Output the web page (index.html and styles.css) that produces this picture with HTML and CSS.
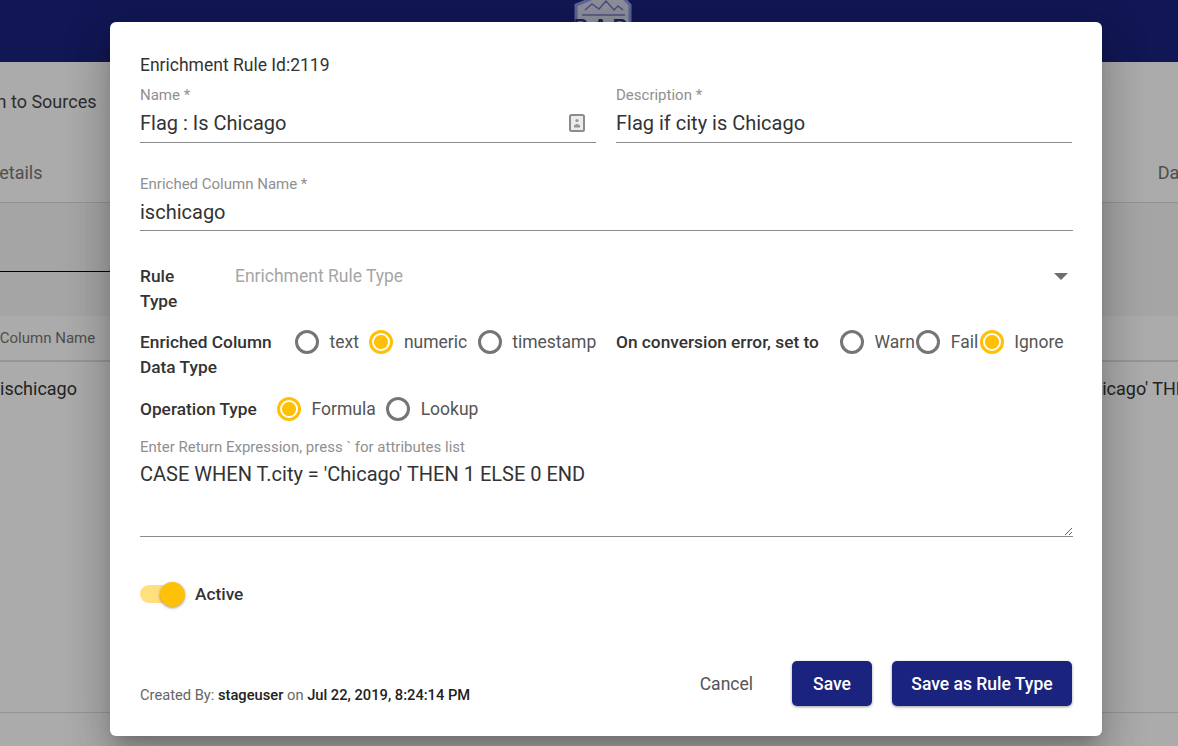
FILE: index.html
```html
<!DOCTYPE html>
<html lang="en">
<head>
<meta charset="utf-8">
<title>Enrichment Rule</title>
<link rel="stylesheet" href="styles.css">
</head>
<body>
<div class="page">
  <header class="topbar">
    <svg class="logo" width="60" height="40" viewBox="0 0 60 40">
      <path d="M18 7 L30 1 L46 1 L57 13 L57 40 L3 40 L3 13 Z" fill="#d2d5e8" stroke="#8a94e0" stroke-width="3"/>
      <path d="M12 18 L19 12 L26 17 L33 9 L41 18 L45 14 L50 18" fill="none" stroke="#6f78c0" stroke-width="1.5"/>
      <path d="M9 23 H52" stroke="#6f78c0" stroke-width="1.5"/>
      <text x="30" y="41" class="logo-text" text-anchor="middle">BAR</text>
    </svg>
  </header>
  <div class="crumb">Return to Sources</div>
  <nav class="tabs">
    <span class="tab">Rule Details</span>
    <span class="tab">Data</span>
  </nav>
  <div class="search"><div class="search-line"></div></div>
  <div class="table-head"><span>Enriched Column Name</span></div>
  <div class="table-row">
    <span class="cell-name">ischicago</span>
    <span class="cell-expr">CASE WHEN T.city = 'Chicago' THEN 1 ELSE 0 END</span>
  </div>
</div>
<div class="overlay"></div>
<main class="dialog">
  <div class="rule-id">Enrichment Rule Id:2119</div>
  <div class="field-row">
    <div class="field field-name">
      <label class="field-label">Name *</label>
      <div class="field-value">Flag : Is Chicago
        <svg class="contact-icon" width="18" height="20" viewBox="0 0 18 20">
          <rect x="2" y="2" width="14" height="16" rx="1.5" fill="#ececec" stroke="#8c8c8c" stroke-width="2"/>
          <circle cx="9" cy="7.5" r="1.6" fill="#969696"/>
          <path d="M6 14.5 V12.5 Q9 9.5 12 12.5 V14.5 Z" fill="#969696"/>
        </svg>
      </div>
    </div>
    <div class="field field-desc">
      <label class="field-label">Description *</label>
      <div class="field-value">Flag if city is Chicago</div>
    </div>
  </div>
  <div class="field field-full">
    <label class="field-label">Enriched Column Name *</label>
    <div class="field-value field-value-short">ischicago</div>
  </div>
  <div class="rule-type">
    <div class="strong-label rule-label">Rule Type</div>
    <div class="select-text">Enrichment Rule Type</div>
    <span class="select-arrow"></span>
  </div>
  <div class="radio-rows">
    <div class="strong-label col-label">Enriched Column Data Type</div>
    <div class="radio-group group-type">
      <span class="radio"></span><span class="radio-text">text</span>
      <span class="radio on"></span><span class="radio-text">numeric</span>
      <span class="radio"></span><span class="radio-text">timestamp</span>
    </div>
    <div class="strong-label err-label">On conversion error, set to</div>
    <div class="radio-group group-err">
      <span class="radio"></span><span class="radio-text tight">Warn</span>
      <span class="radio"></span><span class="radio-text tight">Fail</span>
      <span class="radio on"></span><span class="radio-text">Ignore</span>
    </div>
  </div>
  <div class="op-row">
    <div class="strong-label op-label">Operation Type</div>
    <div class="radio-group">
      <span class="radio on"></span><span class="radio-text">Formula</span>
      <span class="radio"></span><span class="radio-text">Lookup</span>
    </div>
  </div>
  <div class="field-expr">
    <label class="field-label">Enter Return Expression, press ` for attributes list</label>
    <textarea class="expr" rows="3">CASE WHEN T.city = 'Chicago' THEN 1 ELSE 0 END</textarea>
  </div>
  <div class="active-row">
    <span class="switch"><span class="thumb"></span></span>
    <span class="strong-label">Active</span>
  </div>
  <footer class="foot">
    <div class="created">Created By: <b>stageuser</b> on <b>Jul 22, 2019, 8:24:14 PM</b></div>
    <div class="actions">
      <button class="btn-text">Cancel</button>
      <button class="btn btn-save">Save</button>
      <button class="btn btn-rule">Save as Rule Type</button>
    </div>
  </footer>
</main>
</body>
</html>
```
FILE: styles.css
```css
* { box-sizing: border-box; }
html, body { margin: 0; height: 100%; overflow: hidden; }
body { font-family: Roboto, "Liberation Sans", sans-serif; background: #fff; color: #333; }

.page { width: 1178px; height: 746px; overflow: hidden; background: #fff; }
.topbar { height: 62px; background: #1a237e; display: flex; justify-content: center; }
.logo { margin-left: 27px; margin-top: -8px; }
.logo-text { font: 700 20px "Liberation Sans", sans-serif; fill: #27337f; letter-spacing: 5px; }

.crumb { height: 78px; padding-top: 28px; margin-left: -46px; font-size: 18px; line-height: 24px; color: #444; white-space: nowrap; }
.tabs { height: 63px; margin-left: -52px; margin-right: -17px; padding-top: 21px; display: flex; justify-content: space-between; border-bottom: 1px solid #ddd; font-size: 18px; line-height: 24px; color: #777; }
.search { height: 113px; background: #f7f7f7; }
.search-line { width: 110px; height: 69px; border-bottom: 1px solid #000; }
.table-head { height: 46px; background: #fff; border-bottom: 2px solid #e0e0e0; font-size: 15px; color: #757575; line-height: 44px; white-space: nowrap; margin-left: -62px; padding-right: 62px; }
.table-row { height: 351px; display: flex; background: #fff; border-bottom: 1px solid #ddd; font-size: 18px; line-height: 24px; padding-top: 15px; color: #333; white-space: nowrap; }
.cell-name { flex: none; width: 912px; }
.cell-expr { flex: none; }

.overlay { position: absolute; inset: 0; background: rgba(0, 0, 0, .33); }
.dialog {
  position: absolute; left: 110px; top: 22px; width: 992px; height: 714px;
  background: #fff; border-radius: 6px; padding: 33px 30px 0;
  box-shadow: 0 11px 15px -7px rgba(0,0,0,.2), 0 24px 38px 3px rgba(0,0,0,.14), 0 9px 46px 8px rgba(0,0,0,.12);
  display: flex; flex-direction: column;
}
.rule-id { font-size: 17.5px; line-height: 20px; color: #333; }

.field-row { display: flex; gap: 20px; margin-top: 8px; }
.field-label { display: block; font-size: 15px; line-height: 20px; color: #8f8f8f; white-space: nowrap; }
.field-value { position: relative; height: 38px; font-size: 20px; line-height: 36px; color: #333; border-bottom: 1px solid #8c8c8c; white-space: nowrap; }
.field-value-short { height: 37px; }
.field-name, .field-desc { width: 456px; padding-top: 2px; }
.field-full { width: 933px; margin-top: 31px; }
.contact-icon { position: absolute; right: 10px; top: 8px; }

.strong-label { font-size: 17.3px; font-weight: 500; line-height: 25px; color: #333; }
.rule-type { display: flex; position: relative; margin-top: 33px; height: 50px; }
.rule-label { width: 95px; padding-right: 40px; }
.select-text { font-size: 17.5px; line-height: 25px; color: #a6a6a6; }
.select-arrow { position: absolute; left: 914px; top: 9px; width: 0; height: 0; border-left: 7px solid transparent; border-right: 7px solid transparent; border-top: 7px solid #6e6e6e; }

.radio-rows { display: flex; margin-top: 16px; height: 67px; }
.col-label { width: 155px; flex: none; }
.radio-group { display: flex; align-items: center; height: 23px; }
.group-type { width: 321px; flex: none; }
.err-label { width: 224px; flex: none; white-space: nowrap; }
.radio { width: 24px; height: 24px; flex: none; border: 3px solid #757575; border-radius: 50%; background: #fff; display: block; }
.radio.on { border-color: #ffc107; background: radial-gradient(circle, #ffc107 0, #ffc107 6.5px, #fff 7.5px); }
.radio-text { font-size: 17.5px; color: #555; margin-left: 10.5px; margin-right: 10.5px; }
.radio-text.tight { margin-right: 1.5px; }

.op-row { display: flex; height: 25px; }
.op-label { width: 137px; flex: none; }

.field-expr { width: 933px; margin-top: 15px; }
.expr { display: block; width: 100%; height: 80px; border: 0; border-bottom: 1px solid #8c8c8c; padding: 0; margin: 0; outline: 0; font: 20px/34px Roboto, sans-serif; color: #333; background: transparent; resize: vertical; border-radius: 0; }

.active-row { display: flex; align-items: center; gap: 10px; margin-top: 45px; height: 25px; }
.switch { position: relative; width: 45px; height: 25px; display: block; }
.switch::before { content: ""; position: absolute; left: 0; top: 3px; width: 42px; height: 18px; border-radius: 9px; background: #ffdf7e; }
.thumb { position: absolute; right: 0; top: 0; width: 25px; height: 25px; border-radius: 50%; background: #ffc107; box-shadow: 0 1px 3px rgba(0,0,0,.4); }

.foot { display: flex; justify-content: space-between; align-items: flex-start; margin-top: 54px; width: 932px; }
.created { font-size: 14.7px; color: #666; line-height: 20px; padding-top: 24px; }
.created b { font-weight: 500; color: #222; }
.actions { display: flex; gap: 20px; }
.btn-text { border: 0; background: none; font: 17.5px Roboto, sans-serif; color: #555; padding: 0 19px; height: 45px; }
.btn { border: 0; height: 45px; padding: 0; border-radius: 5px; background: #1a237e; color: #fff; font: 500 17.5px Roboto, sans-serif; box-shadow: 0 1px 3px rgba(0,0,0,.4); }
.btn-save { width: 80px; }
.btn-rule { width: 180px; }
```
